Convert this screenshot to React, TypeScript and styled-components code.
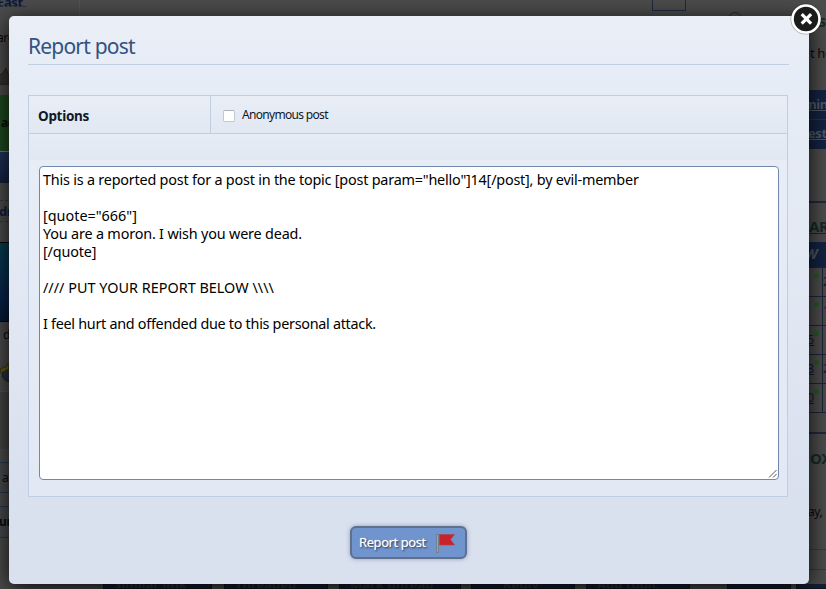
import React from "react";
import styled, { createGlobalStyle, css } from "styled-components";

const Global = createGlobalStyle`
  *, *::before, *::after { box-sizing: border-box; }
  html, body { margin: 0; height: 100%; overflow: hidden; background: #4c4c4c; }
  body { font-family: "Noto Sans", Tahoma, sans-serif; color: #000; }
`;

const line = "#bfcfe3";

/* ---------- dimmed forum page behind the dialog ---------- */

const Page = styled.div`
  position: relative;
  width: 826px;
  height: 589px;
  overflow: hidden;
  background: #4c4c4c;
`;

const Forum = styled.div`
  display: grid;
  grid-template-columns: 79px 1fr 17px;
  grid-template-rows: 584px 5px;
  height: 589px;
`;

const Column = styled.div`
  display: flex;
  flex-direction: column;
  min-width: 0;
  overflow: hidden;
`;

const Slice = styled.div<{
  $h: number; $bg?: string; $color?: string; $size?: number; $bold?: boolean;
  $top?: string; $bottom?: string; $indent?: number; $underline?: boolean; $w?: number;
}>`
  flex: none;
  height: ${p => p.$h}px;
  width: ${p => (p.$w ? `${p.$w}px` : "auto")};
  line-height: ${p => p.$h - 2}px;
  background: ${p => p.$bg ?? "transparent"};
  color: ${p => p.$color ?? "#0b0b0b"};
  font-size: ${p => p.$size ?? 12}px;
  font-weight: ${p => (p.$bold ? 700 : 400)};
  text-indent: ${p => p.$indent ?? 0}px;
  text-decoration: ${p => (p.$underline ? "underline" : "none")};
  letter-spacing: -0.4px;
  white-space: nowrap;
  overflow: hidden;
  ${p => p.$top && css`border-top: ${p.$top};`}
  ${p => p.$bottom && css`border-bottom: ${p.$bottom};`}
`;

const TopBand = styled.div`
  height: 16px;
  display: flex;
  align-items: flex-start;
  border-left: 1px solid #545454;
  padding-left: 572px;
`;

const TopBox = styled.div`
  width: 34px;
  height: 11px;
  border: 1px solid #20293f;
  border-top: 0;
`;

const Ring = styled.div`
  width: 14px;
  height: 14px;
  margin: 12px 0 0 42px;
  border: 1px solid #26302f;
  border-radius: 50%;
`;

const StatRow = styled.div`
  display: flex;
  flex: none;
  height: 29px;
  border-bottom: 1px solid #1c2539;
  color: #101b36;
  font-size: 12px;
  line-height: 27px;
`;

const StatCell = styled.div`
  display: flex;
  width: 14px;
  flex: none;
  border-right: 1px solid #1c2539;
  text-decoration: underline;
`;

const StatDigit = styled.span`
  width: 5px;
  display: flex;
  justify-content: flex-end;
  overflow: hidden;
`;

const Dot = styled.i`
  width: 5px;
  height: 5px;
  margin: 5px 0 0 0;
  border-radius: 50%;
  background: #245b24;
`;

const BottomBar = styled.div`
  grid-column: 1 / -1;
  display: flex;
  align-items: flex-start;
  padding-left: 103px;
`;

const BottomButton = styled.div<{ $w: number; $gap: number; $indent?: number }>`
  flex: none;
  width: ${p => p.$w}px;
  height: 5px;
  margin-right: ${p => p.$gap}px;
  overflow: hidden;
  background: #151f35;
  border: solid #10141e;
  border-width: 0 1px 1px;
  color: #34383f;
  font-size: 13px;
  line-height: 0;
  font-weight: 700;
  text-indent: ${p => p.$indent ?? 10}px;
  white-space: nowrap;
`;

/* ---------- dialog ---------- */

const Dialog = styled.section`
  position: absolute;
  left: 9px;
  top: 16px;
  width: 800px;
  height: 568px;
  padding: 17px 20px 0 19px;
  display: flex;
  flex-direction: column;
  border-radius: 5px;
  background: linear-gradient(#e9eef7 0%, #e4ebf4 22%, #e4eaf4 40%, #d9e0ee 86%, #d9e0ee 100%);
  box-shadow: 0 4px 22px rgba(0, 0, 0, 0.88);
`;

const Title = styled.h1`
  flex: none;
  margin: 0;
  height: 32px;
  border-bottom: 1px solid ${line};
  color: #335280;
  font-size: 21px;
  font-weight: 400;
  line-height: 27px;
  letter-spacing: -0.8px;
`;

const Panel = styled.div`
  flex: none;
  width: 760px;
  height: 402px;
  margin-top: 30px;
  border: 1px solid ${line};
  background: linear-gradient(#e8edf6, #e2e9f4);
`;

const OptionsRow = styled.div`
  display: grid;
  grid-template-columns: 182px 1fr;
  height: 38px;
  border-bottom: 1px solid ${line};
  background: linear-gradient(#e9eef6, #e1e8f2);
`;

const OptionsName = styled.div`
  height: 37px;
  padding-left: 9px;
  border-right: 1px solid ${line};
  color: #111827;
  font-size: 13.5px;
  font-weight: 700;
  line-height: 41px;
  letter-spacing: -0.3px;
`;

const CheckLabel = styled.label`
  display: flex;
  align-items: center;
  gap: 7px;
  height: 37px;
  padding: 0 0 0 12px;
  color: #111827;
  font-size: 12px;
  line-height: 36px;
  letter-spacing: -0.68px;
`;

const Check = styled.input`
  appearance: none;
  width: 12px;
  height: 12px;
  margin: 3px 0 0;
  border: 1px solid #c4c8ce;
  border-top-color: #adb0b5;
  border-radius: 2px;
  background: #fff;
`;

const Spacer = styled.div`
  height: 26px;
  background: linear-gradient(#e6ecf5, #e1e8f1);
`;

const Editor = styled.div`
  display: flex;
  flex-direction: column;
  width: 740px;
  height: 314px;
  margin: 6px 0 0 10px;
  padding: 4px 1px 0 3px;
  border: 1px solid #7088ad;
  border-radius: 4px;
  background: #fff;
`;

const TextLine = styled.div<{ $track: number }>`
  flex: none;
  height: 18px;
  font-size: 14.4px;
  line-height: 18px;
  white-space: pre;
  letter-spacing: ${p => p.$track}px;
`;

const Grip = styled.svg`
  display: block;
  width: 9px;
  height: 9px;
  margin: auto 0 1px auto;
`;

const Submit = styled.button`
  flex: none;
  align-self: center;
  display: flex;
  align-items: center;
  width: 117px;
  height: 33px;
  margin: 29px 0 0 0;
  padding: 0 0 0 7px;
  border: 2px solid #5f6f8c;
  border-radius: 6px;
  background: #7094cd;
  box-shadow: 0 0 4px rgba(74, 104, 150, 0.55);
  color: #fff;
  font: 400 13px/29px "Noto Sans", Tahoma, sans-serif;
  letter-spacing: -0.42px;
  white-space: nowrap;
  text-shadow: 1px 1px 2px #1b2a44, 0 0 1px #fff;
`;

const SubmitText = styled.span`
  width: 77px;
  text-align: left;
`;

const Close = styled.button`
  position: absolute;
  left: 790px;
  top: 3px;
  width: 32px;
  height: 32px;
  padding: 0;
  border: 0;
  background: none;
`;

const message: [string, number][] = [
  ['This is a reported post for a post in the topic [post param="hello"]14[/post], by evil-member', -0.21],
  ["", 0],
  ['[quote="666"]', 0],
  ["You are a moron. I wish you were dead.", -0.18],
  ["[/quote]", -0.15],
  ["", 0],
  ["//// PUT YOUR REPORT BELOW \\\\\\\\", 0.02],
  ["", 0],
  ["I feel hurt and offended due to this personal attack.", -0.29],
];

const stats: [string, string][] = [["", "2"], ["", "1"], ["5", ""], ["3", "2"], ["0", ""]];

function ForumPage() {
  return (
    <Forum aria-hidden>
      <Column>
        <Slice $h={7} $w={26} $color="#0b1a3d" $bold $size={13} $bottom="1px dashed #292f3c" $indent={-3}>East</Slice>
        <Slice $h={20} />
        <Slice $h={24} $indent={-3}>arc</Slice>
        <Slice $h={16} />
        <svg width="12" height="20" viewBox="0 0 12 20">
          <path d="M6 1l2 6h6v5l-3 2 1 5-6-2-5 1-5-9 6-2z" fill="#343230" stroke="#292725" />
        </svg>
        <Slice $h={8} />
        <Slice $h={57} $bg="#1d4a20" $bold $indent={1} $bottom="1px solid #777">ad</Slice>
        <Slice $h={31} $bg="linear-gradient(#21345d,#14213e)" />
        <Slice $h={17} />
        <Slice $h={22} $top="1px dashed #383838" $bottom="1px dashed #383838" $color="#111e3e" $bold $size={13} $indent={-1}>dr</Slice>
        <Slice $h={20} />
        <Slice $h={80} $bg="linear-gradient(160deg,#073f50,#08254c 50%,#020d22)" $top="1px solid #050505" $bottom="1px solid #050505" />
        <Slice $h={28} $indent={3}>d</Slice>
        <Slice $h={11} />
        <svg width="12" height="24" viewBox="0 0 12 24">
          <circle cx="9" cy="14" r="6.500" fill="#29303d" stroke="#171c25" />
          <path d="M0 8l2 0 1-3 2 2 3-5 1 6-8 4z" fill="#665a12" stroke="#2c280c" strokeWidth="0.700" />
        </svg>
        <Slice $h={6} />
        <Slice $h={58} $top="1px solid #555" $bg="#454545" />
        <Slice $h={13} />
        <Slice $h={31} $top="1px solid #27364a" $bottom="1px solid #27364a" $indent={2} $bg="#484a4e">a</Slice>
        <Slice $h={13} />
        <Slice $h={32} $top="1px solid #27364a" $bottom="1px solid #27364a" $indent={-1} $bold $bg="#484a4e">ur</Slice>
      </Column>
      <TopBand>
        <TopBox />
        <Ring />
      </TopBand>
      <Column>
        <Slice $h={8} />
        <Slice $h={28} $size={16} $bold $color="#142b27" $indent={9}>sc</Slice>
        <Slice $h={6} />
        <Slice $h={25} $size={13} $indent={1}>t he</Slice>
        <Slice $h={23} />
        <Slice $h={30} $bg="#142342" $color="#515865" $bold $underline $size={13} $bottom="1px solid #26334a" $indent={-5}>min</Slice>
        <Slice $h={29} $bg="#142342" $color="#515865" $bold $underline $size={13} $indent={-1}>est</Slice>
        <Slice $h={52} />
        <Slice $h={2} $bg="#20293e" />
        <Slice $h={9} />
        <Slice $h={30} $bold $underline $size={15} $color="#142b27">AR</Slice>
        <Slice $h={26} $bg="#142342" $color="#515865" $bold $size={14} $bottom="1px solid #1c2539" $indent={-4}><em>W</em></Slice>
        {stats.map(([a, b], i) => (
          <StatRow key={i}><StatCell><StatDigit>{a}</StatDigit><Dot /></StatCell>{b}</StatRow>
        ))}
        <Slice $h={19} />
        <Slice $h={2} $bg="#20293e" />
        <Slice $h={10} />
        <Slice $h={30} $bold $size={15} $color="#142b27" $indent={1}>OX</Slice>
        <Slice $h={25} />
        <Slice $h={28} $indent={-1}>ay,</Slice>
        <Slice $h={22} />
        <Slice $h={21} $top="1px solid #3b3b3b" $bottom="1px solid #3b3b3b" />
      </Column>
      <BottomBar>
        <BottomButton $w={109} $gap={12}>Similar link</BottomButton>
        <BottomButton $w={104} $gap={11}>Threaded</BottomButton>
        <BottomButton $w={122} $gap={10}>Mark unread</BottomButton>
        <BottomButton $w={104} $gap={11} $indent={31}>Reply</BottomButton>
        <BottomButton $w={104} $gap={37}>Add topic</BottomButton>
        <BottomButton $w={64} $gap={5} />
        <BottomButton $w={36} $gap={0} />
      </BottomBar>
    </Forum>
  );
}

export default function App() {
  return (
    <>
      <Global />
      <Page>
        <ForumPage />
        <Dialog role="dialog" aria-label="Report post">
          <Title>Report post</Title>
          <Panel>
            <OptionsRow>
              <OptionsName>Options</OptionsName>
              <CheckLabel><Check type="checkbox" />Anonymous post</CheckLabel>
            </OptionsRow>
            <Spacer />
            <Editor role="textbox" aria-multiline="true">
              {message.map(([text, track], i) => (
                <TextLine key={i} $track={track}>{text}</TextLine>
              ))}
              <Grip viewBox="0 0 9 9" stroke="#555" fill="none">
                <path d="M1 8.500L8.500 1M5 8.500L8.500 5" />
              </Grip>
            </Editor>
          </Panel>
          <Submit>
            <SubmitText>Report post</SubmitText>
            <svg width="20" height="22" viewBox="0 0 20 22">
              <path d="M1.500 2v19" stroke="#777b85" strokeWidth="2.600" />
              <path d="M1.500 3v17" stroke="#a2a6ae" strokeWidth="0.900" />
              <path d="M3.500 2.500h15l-4 5 4 5.500h-15z" fill="#c8232b" stroke="#a8434f" strokeWidth="0.600" />
            </svg>
          </Submit>
        </Dialog>
        <Close aria-label="Close">
          <svg width="32" height="32" viewBox="0 0 32 32">
            <circle cx="16" cy="16" r="15.500" fill="#000" opacity="0.280" />
            <circle cx="16" cy="16" r="13.500" fill="#1c1c1c" stroke="#fff" strokeWidth="2.600" />
            <path d="M11.700 11.200l9.400 9.400M21.100 11.200l-9.400 9.400" stroke="#fff" strokeWidth="3.200" />
          </svg>
        </Close>
      </Page>
    </>
  );
}
